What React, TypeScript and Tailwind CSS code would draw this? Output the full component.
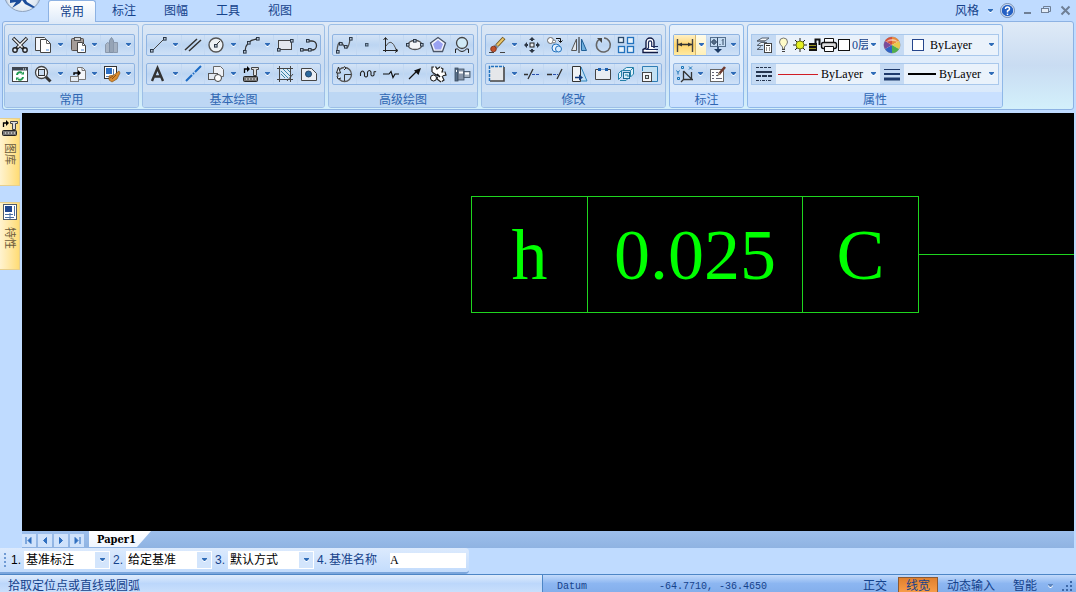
import React from "react";

const FONT = "font-['Liberation_Sans','Noto_Sans_CJK_SC',sans-serif]";

const node = (x: number, y: number) => (
  <rect key={`${x}-${y}`} x={x + 0.5} y={y + 0.5} width="2.6" height="2.6" fill="#b9c6d6" stroke="#2b3746" />
);

// every toolbar glyph is drawn on an 18x18 grid
const icons: Record<string, React.ReactNode> = {
  cut: (
    <>
      <path d="M2 2l11 11M16 2L5 13" stroke="#222" strokeWidth="3.4" />
      <path d="M2.500 2.500l9 9M15.500 2.500l-9 9" stroke="#f2f4f6" strokeWidth="1.500" />
      <circle cx="4" cy="14" r="2.200" fill="#dfe9f5" stroke="#222" strokeWidth="1.400" />
      <circle cx="14" cy="14" r="2.200" fill="#dfe9f5" stroke="#222" strokeWidth="1.400" />
    </>
  ),
  copy: (
    <>
      <path d="M1.500 1.500h9l1 1v12h-10z" fill="#f4f6fa" stroke="#444" />
      <path d="M6.500 3.500h6l4 4v9h-10z" fill="#fff" stroke="#444" />
      <path d="M12.500 3.500v4h4" stroke="#666" />
      <rect x="12" y="13" width="3" height="2" fill="#a9c7ee" stroke="none" />
    </>
  ),
  paste: (
    <>
      <rect x="2.500" y="2.500" width="12" height="12" rx="1" fill="#a49c98" stroke="#57504d" />
      <rect x="5.500" y="1.500" width="6" height="3" fill="#d8d8d8" stroke="#555" />
      <path d="M8.500 6.500h5l3 3v7h-8z" fill="#fff" stroke="#444" />
      <path d="M13.500 6.500v3h3" stroke="#666" />
      <rect x="12" y="13" width="3" height="2" fill="#a9c7ee" stroke="none" />
    </>
  ),
  chart: (
    <>
      <path d="M2.500 8.500l2-2 2 1v9h-4z" fill="#a9b5c5" stroke="#8a99ad" />
      <path d="M6.500 4.500l2-3 2 3v12h-4z" fill="#96a4b6" stroke="#8090a5" />
      <path d="M10.500 6.500h4v10h-4z" fill="#a4b1c2" stroke="#8a99ad" />
    </>
  ),
  refresh: (
    <>
      <rect x="1.500" y="2.500" width="15" height="14" fill="#fff" stroke="#444" />
      <path d="M1 4h16" stroke="#3c4652" strokeWidth="3" />
      <path d="M12 4h1M14 4h1" stroke="#fff" />
      <path d="M6 10a3 3 0 0 1 5-2M12 12a3 3 0 0 1-5 2" stroke="#1f9a50" strokeWidth="2" />
      <path d="M10 9.500h3v-3zM8 12.500H5v3z" fill="#1f9a50" stroke="none" />
    </>
  ),
  zoom: (
    <>
      <path d="M11 11l5.500 5.500" stroke="#333" strokeWidth="3" />
      <circle cx="7.500" cy="7.500" r="6" fill="#f6f9fd" stroke="#444" strokeWidth="1.300" />
      <rect x="4.500" y="4.500" width="6" height="6" fill="#c8dcf2" stroke="#333" />
    </>
  ),
  insert: (
    <>
      <path d="M8.500 2.500h5l3 3v9h-8z" fill="#f5f7fa" stroke="#777" />
      <path d="M13 2.500v3h3" stroke="#777" />
      <rect x="1.500" y="11.500" width="8" height="5" fill="#e4ebf3" stroke="#777" />
      <path d="M5 10V8h6" stroke="#000" strokeWidth="1.400" />
      <path d="M9 5l3 3-3 3z" fill="#000" stroke="none" />
    </>
  ),
  brush: (
    <>
      <rect x="1.500" y="1.500" width="12" height="12" fill="#fff" stroke="#333" />
      <rect x="3" y="3" width="6" height="6" fill="#2c6fc4" stroke="none" />
      <path d="M10.500 4v6M3 11.500h5" stroke="#5b7fae" />
      <path d="M6 11l5-1 5-4 1 2-3 6-5 3-3-2z" fill="#d98b2e" stroke="#8c5a1c" strokeWidth="0.700" />
      <path d="M9 14l4-4M7 13l3-2" stroke="#8c4f14" />
    </>
  ),
  line: (
    <>
      <path d="M3 15L15 3" />
      {node(1, 13)}
      {node(14, 1)}
    </>
  ),
  parallel: <path d="M1 14L13 3M5 15L17 4" stroke="#333" strokeWidth="1.500" />,
  circle: (
    <>
      <circle cx="9" cy="9" r="7" fill="#edf1f5" stroke="#555" strokeWidth="1.400" />
      <path d="M9 9l4-4" stroke="#333" />
      {node(7, 8)}
    </>
  ),
  arc: (
    <>
      <path d="M3 15Q4 4 15 3" stroke="#333" strokeWidth="1.300" />
      {node(1, 14)}
      {node(5, 5)}
      {node(14, 1)}
    </>
  ),
  rect: (
    <>
      <rect x="2.500" y="4.500" width="13" height="9" fill="#e3e7ed" stroke="#444" />
      {node(1, 12)}
      {node(14, 3)}
    </>
  ),
  polyline: (
    <>
      <path d="M2 14h8M8 5h4a4.500 4.500 0 0 1 0 9h-2" stroke="#333" strokeWidth="1.300" />
      {node(0, 12)}
      {node(6, 3)}
      {node(8, 12)}
    </>
  ),
  letter: <path d="M3 16L8.500 3 14 16M5 11.500h7" stroke="#333" strokeWidth="2.400" />,
  centerline: <path d="M2 16l6-6M9 9l1-1M11 7l6-6" stroke="#1c6bc4" strokeWidth="2" />,
  shapes: (
    <>
      <path d="M6.500 1.500h7l3 3v7h-10z" fill="#eef1f6" stroke="#666" />
      <rect x="1.500" y="8.500" width="9" height="6" fill="#e3e9f1" stroke="#555" />
      <circle cx="11" cy="13" r="3.500" fill="#fff" stroke="#444" />
    </>
  ),
  library: (
    <>
      <path d="M2.500 8V4h3" stroke="#000" strokeWidth="1.300" />
      <path d="M5 1l3 3-3 3z" fill="#000" stroke="none" />
      <path d="M9.500 2.500h7v2h-2v6h-3v-6h-2z" fill="#ddd" stroke="#444" />
      <rect x="1.500" y="11.500" width="14" height="5" rx="1" fill="#777" stroke="#222" />
      <path d="M4 14h1M7 14h1M10 14h1M13 14h1" stroke="#fff" />
    </>
  ),
  hatch: (
    <>
      <rect x="4.500" y="3.500" width="10" height="10" fill="#dceaf5" stroke="none" />
      <path d="M5 6l7 7M5 9l4 4M7 4l7 7M11 4l3 3" stroke="#3a86a8" />
      <path d="M3.500 1v16M1 3.500h16M14.500 1v16M1 14.500h16M17 9l-6 7" stroke="#444" />
    </>
  ),
  region: (
    <>
      <path d="M1.500 3.500h10l5 5v7h-15z" fill="#e9edf3" stroke="#444" />
      <circle cx="8.500" cy="9" r="3" fill="#2c6a9e" stroke="#24466a" />
    </>
  ),
  spline: (
    <>
      <path d="M2 15C3 3 6 6 9 10s5 1 6-7" stroke="#555" strokeWidth="1.300" />
      {node(1, 14)}
      {node(4, 6)}
      {node(9, 9)}
      {node(14, 1)}
    </>
  ),
  point: <rect x="6.500" y="7.500" width="2.500" height="2.500" fill="#8fa2b8" stroke="#3c5064" />,
  curve: (
    <>
      <path d="M3.500 2v14M1 14.500h14M1.500 4l2-2.500 2 2.500M13 12.500l3 2-3 2" stroke="#222" />
      <path d="M4 10Q9 1 14 13" stroke="#555" />
    </>
  ),
  ellipse: (
    <>
      <ellipse cx="9" cy="9" rx="7" ry="4.500" fill="#f4f5f7" stroke="#555" strokeWidth="1.300" />
      {node(0, 7)}
      {node(14, 7)}
      {node(7, 3)}
    </>
  ),
  polygon: (
    <>
      <path d="M9 1.500l7.500 5.500-3 8.500h-9L1.500 7z" fill="#f3f5ff" stroke="#4a5568" strokeWidth="1.300" />
      <path d="M9 4l5 4-2 5.500H6L4 8z" fill="#9aa2f2" stroke="none" />
    </>
  ),
  balloon: (
    <>
      <circle cx="9" cy="7" r="5.500" fill="#d0eaf7" stroke="#444" strokeWidth="1.300" />
      <path d="M2.500 17v-4h2q4.500 5 9 0h2v4" stroke="#222" />
    </>
  ),
  pie: (
    <>
      <circle cx="9.500" cy="9.500" r="7" stroke="#555" strokeWidth="1.300" />
      <path d="M9.500 16V9.500H16" stroke="#333" />
      <path d="M1.500 8l2-6 2 6zM9 1.500l2 1.500-2 2M2 11l1 3 3-1" fill="#dfe9f5" stroke="#222" />
    </>
  ),
  wave: <path d="M1.500 11V8q2-4 4 0v3q1.500 2 3 0V7q2-3 3.500 0v3q1.500 2 3 0V7q1-1 2 0" stroke="#222" strokeWidth="1.100" />,
  breakline: <path d="M1 9h6l2-2.500 2 6L13 9h4" stroke="#111" strokeWidth="1.200" />,
  arrow: (
    <>
      <path d="M3 14l7-7" stroke="#111" strokeWidth="1.300" />
      <path d="M15 3l-2.500 7L8 5.500z" fill="#111" stroke="none" />
    </>
  ),
  gear: (
    <>
      <path
        d="M3 7V2h4l1 2 3-2 3 2-1 3h3l1 3-4 1 2 4-3 2-4-3 1-3z"
        fill="#fff"
        stroke="#222"
        strokeWidth="1.200"
        strokeDasharray="7 1"
      />
      <circle cx="4.500" cy="13" r="3" fill="#fff" stroke="#111" />
      <path d="M8 9l3 3" stroke="#111" strokeWidth="1.600" />
    </>
  ),
  shaft: (
    <>
      <rect x="2" y="3" width="3" height="13" fill="#59708a" stroke="#394a5e" strokeWidth="0.800" />
      <rect x="5" y="4" width="6" height="11" fill="#8795a8" stroke="#394a5e" strokeWidth="0.800" />
      <rect x="11" y="6.500" width="6" height="6" fill="#a5b3c2" stroke="#394a5e" strokeWidth="0.800" />
      <path d="M3 6h1M6 7.500h4M12 8.500h4" stroke="#fff" strokeWidth="2" />
    </>
  ),
  erase: (
    <>
      <path d="M1 16.500h5M12 16.500h5" stroke="#444" />
      <path d="M16 2L9 9.500" stroke="#74581f" strokeWidth="4" />
      <path d="M15.500 2.500L9 9.500" stroke="#e9c66c" strokeWidth="2" />
      <path d="M9 9.500l-2 2" stroke="#7d8794" strokeWidth="4.400" />
      <circle cx="5.500" cy="13" r="2.800" fill="#c0502a" stroke="#7c2c12" strokeWidth="0.800" />
    </>
  ),
  move: (
    <>
      <rect x="7" y="7" width="4" height="4" fill="#e9edf3" stroke="#222" />
      <path d="M9 1l3 3H6zM9 17l3-3H6zM1 9l3-3v6zM17 9l-3-3v6z" fill="#2c3644" stroke="none" />
      <path d="M9 3v2M9 13v2M3 9h2M13 9h2" stroke="#2c3644" strokeWidth="2" />
    </>
  ),
  duplicate: (
    <>
      <circle cx="4.500" cy="4.500" r="3" fill="#fff" stroke="#666" />
      <circle cx="8" cy="5.500" r="1.500" fill="#fff" stroke="#777" />
      <circle cx="10" cy="12" r="4" fill="#e6f2ff" stroke="#2272bd" />
      <circle cx="12.500" cy="13" r="3" fill="#d5eaff" stroke="#2272bd" />
      <path d="M10 2.500h4.500V6M12.500 4.500l2 2 2-2" stroke="#111" />
    </>
  ),
  mirror: (
    <>
      <path d="M9 1v16" stroke="#222" />
      <path d="M6.500 3v11.500h-5z" fill="#e3e8ee" stroke="#555" />
      <path d="M11.500 3v11.500h5z" fill="#6fb0df" stroke="#205f96" />
    </>
  ),
  rotate: (
    <>
      <path d="M5 3.500a7 7 0 1 0 5-1.500" stroke="#666" strokeWidth="1.500" />
      <path d="M3 2h5v5z" fill="#444" stroke="none" />
    </>
  ),
  array: (
    <>
      <rect x="1.500" y="1.500" width="5" height="5" fill="#e8f2fb" stroke="#2b4a6c" strokeWidth="1.300" />
      <rect x="10.500" y="1.500" width="6" height="6" fill="#e8f2fb" stroke="#2272bd" strokeWidth="1.300" />
      <rect x="1.500" y="10.500" width="6" height="6" fill="#e8f2fb" stroke="#2272bd" strokeWidth="1.300" />
      <rect x="10.500" y="10.500" width="6" height="6" fill="#e8f2fb" stroke="#2272bd" strokeWidth="1.300" />
    </>
  ),
  offset: (
    <>
      <path d="M17 16.500H2v-3l3-1.500V6a4 4 0 0 1 8 0v6" fill="#fff" stroke="#111a44" strokeWidth="1.400" />
      <path d="M17 13.500H5.500l2-1.500V6.500a1.600 1.600 0 0 1 3.200 0v4H17" stroke="#1b2b5c" strokeWidth="1.200" />
    </>
  ),
  select: (
    <>
      <rect x="2" y="2" width="14" height="14" fill="#e5e7ea" stroke="none" />
      <path d="M2 16h14V2" stroke="#444" strokeWidth="1.600" />
      <path d="M1.500 16V1.500H16" stroke="#2272bd" strokeWidth="1.500" strokeDasharray="3 1" />
    </>
  ),
  trim: (
    <>
      <path d="M1 9.500h4M5 14L10 4" stroke="#333" strokeWidth="1.300" />
      <path d="M9 9.500h8" stroke="#2a4fae" strokeDasharray="3 1" />
    </>
  ),
  extend: (
    <>
      <path d="M1 9.500h5M11 14l5-10" stroke="#333" strokeWidth="1.300" />
      <path d="M7 9.500h5" stroke="#2a4fae" strokeDasharray="3 1" />
    </>
  ),
  stretch: (
    <>
      <path d="M11 2l6 14H9z" fill="#bfdff5" stroke="#2f84bd" />
      <path d="M2.500 1.500h8v15h-8z" fill="#eef2f6" stroke="#333" />
      <path d="M5 12.500h5" stroke="#123a7c" strokeWidth="1.300" />
      <path d="M9 9.500l4 3-4 3z" fill="#123a7c" stroke="none" />
    </>
  ),
  breakAt: (
    <>
      <path d="M5 4.500H1.500v10h15v-10H14" fill="#e8edf3" stroke="#444" />
      <path d="M7 4.500h5" stroke="#7ba5d5" />
      <rect x="4" y="3" width="3" height="3" fill="#1c5fae" stroke="none" />
      <rect x="11" y="3" width="3" height="3" fill="#1c5fae" stroke="none" />
    </>
  ),
  explode: (
    <>
      <path d="M5.500 5.500l4-3h7l-3 3zM13.500 6v6l3-3V3M1.500 8.500l3-3v6l-3 3z" fill="#dff2fb" stroke="#2580a8" />
      <rect x="6.500" y="7.500" width="6" height="6" fill="#d5ecf8" stroke="#1a6790" />
      <path d="M3 15.500h6l2-2M8 10h3v2" stroke="#2580a8" />
    </>
  ),
  scale: (
    <>
      <path d="M1.500 6V1.500h15v15H10" fill="#c3e1f3" stroke="#2f7db4" />
      <rect x="1.500" y="7.500" width="9" height="9" fill="#f4f5f7" stroke="#444" />
      <rect x="4.500" y="10.500" width="3" height="3" fill="#cdd" stroke="#444" />
    </>
  ),
  dimension: (
    <>
      <path d="M1.500 3v13M16.500 3v13" stroke="#444" strokeWidth="1.400" />
      <path d="M2 8.500h14" stroke="#333" strokeWidth="1.300" />
      <path d="M2 8.500L6 6.500v4zM16 8.500l-4-2v4z" fill="#333" stroke="none" />
    </>
  ),
  tolerance: (
    <>
      <rect x="1.500" y="1.500" width="15" height="9" fill="#c5dcf3" stroke="#56708e" />
      <circle cx="5" cy="6" r="2" stroke="#334a66" />
      <path d="M8.500 1.500v9M2 6h6M5 3v6M10.500 8.500h1M14 3v6M13 4.500l1-1" stroke="#334a66" />
      <path d="M9 11v3" stroke="#1d3b63" strokeWidth="1.600" />
      <path d="M9 17l-4-4h8z" fill="#1d3b63" stroke="none" />
    </>
  ),
  coordinate: (
    <>
      <path d="M7.500 6v8.500H17M7.500 14.500L5 17M7.500 6l8 8V7" stroke="#333" strokeWidth="1.300" />
      <path d="M0.500 5.500l1.500 2 1.500-2M2 7.500v2M5.500 1.500h2v2h-2zM13 1.500l3 3M16 1.500l-3 3M1.500 12.500h2v2h-2z" stroke="#1672b5" />
    </>
  ),
  edit: (
    <>
      <rect x="1.500" y="4.500" width="13" height="12" fill="#fff" stroke="#666" />
      <path d="M3 7.500h2M7 7.500h2M3 10.500h2M7 10.500h2M3 13.500h2M7 13.500h6" stroke="#667" />
      <path d="M16 2l-6 7" stroke="#6f3a2e" strokeWidth="2.600" />
      <path d="M10.500 7.500l-2.500 3.500 3.500-2z" fill="#e8cf9c" stroke="#333" strokeWidth="0.500" />
    </>
  ),
  layers: (
    <>
      <path d="M2 5l5-3h7l-4 3zM2 9.500l4-3h6M2 13.500l4-3M2 5h8M2 9.500h6M2 13.500h6" fill="#f7f9fb" stroke="#56616f" />
      <rect x="9.500" y="7.500" width="7" height="9" fill="#fff" stroke="#444" />
      <path d="M11 9.500h4M11 12h1M14 12h1M11 14h1M14 14h1" stroke="#333" />
    </>
  ),
  palette: (
    <>
      <circle cx="9" cy="9" r="8" fill="#fff" stroke="#777" strokeWidth="0.600" />
      <path d="M9 9V1a8 8 0 0 1 7 4z" fill="#e88a3c" stroke="none" />
      <path d="M9 9l7-4a8 8 0 0 1 0 8z" fill="#e8c84c" stroke="none" />
      <path d="M9 9l7 4a8 8 0 0 1-7 4z" fill="#4fae4c" stroke="none" />
      <path d="M9 9v8a8 8 0 0 1-7-4z" fill="#2f62c4" stroke="none" />
      <path d="M9 9l-7 4a8 8 0 0 1 0-8z" fill="#7a4a9a" stroke="none" />
      <path d="M9 9L2 5a8 8 0 0 1 7-4z" fill="#d4503c" stroke="none" />
      <path d="M3 6a7 6 0 0 1 12 0q-6-2-12 0z" fill="#ffffff80" stroke="none" />
    </>
  ),
  linetype: (
    <>
      <path d="M1 2.500h16" stroke="#26354f" strokeDasharray="3 1" />
      <path d="M1 7h16" stroke="#26354f" strokeWidth="2" />
      <path d="M1 11h16" stroke="#26354f" strokeWidth="2" strokeDasharray="5 1" />
      <path d="M1 15.500h16" stroke="#26354f" strokeDasharray="3 1 1 1" />
    </>
  ),
  lineweight: (
    <>
      <path d="M1 4.500h16" stroke="#1f3a6a" />
      <path d="M1 9h16" stroke="#1f3a6a" strokeWidth="2" />
      <path d="M1 14h16" stroke="#1f3a6a" strokeWidth="3" />
    </>
  ),
  properties: (
    <>
      <rect x="2.500" y="1.500" width="13" height="15" fill="#fff" stroke="#4c5a6c" />
      <rect x="4" y="3" width="7" height="6" fill="#1f478f" stroke="none" />
      <path d="M13.500 3v10M4 11.500h8M4 14.500h9M9 10v6" stroke="#4a6ea0" />
    </>
  ),
};

function Icon({ name, size = 18 }: { name: string; size?: number }) {
  return (
    <svg width={size} height={size} viewBox="0 0 18 18" fill="none" stroke="#444" className="shrink-0" aria-hidden="true">
      {icons[name]}
    </svg>
  );
}

function Caret({ className = "text-[#2f6cb8]" }: { className?: string }) {
  return (
    <svg width="5" height="4" viewBox="0 0 5 4" className={`shrink-0 ${className}`} aria-hidden="true">
      <path d="M0 1h5v1L3 4H2L0 2z" fill="#fff" />
      <path d="M0 0h5v1L3 3H2L0 1z" fill="currentColor" />
    </svg>
  );
}

interface Tool {
  icon: string;
  label: string;
  menu?: boolean;
  active?: boolean;
}

function ToolRow({ tools }: { tools: Tool[] }) {
  return (
    <div className="flex h-[22px] rounded-[2px] border border-[#8fb4e2] bg-gradient-to-b from-[#d3e3f6] via-[#bcd5f2] to-[#cfe1f7]">
      {tools.map((tool) => (
        <React.Fragment key={tool.icon}>
          <button
            type="button"
            aria-label={tool.label}
            className={`flex min-w-0 flex-1 items-center justify-center ${
              tool.active ? "bg-gradient-to-b from-[#fff0c4] via-[#ffd56b] to-[#ffe9a0]" : "border-l border-[#c3d8f1] first:border-l-0"
            }`}
          >
            <Icon name={tool.icon} />
          </button>
          {tool.menu && (
            <button
              type="button"
              aria-label={`${tool.label}菜单`}
              className={`flex w-[11px] shrink-0 items-center justify-center ${
                tool.active ? "border-l border-[#d8b96c] bg-gradient-to-b from-[#fffbe9] to-[#fff0b8]" : ""
              }`}
            >
              <Caret />
            </button>
          )}
        </React.Fragment>
      ))}
    </div>
  );
}

function Panel({
  title,
  width,
  bright,
  children,
}: {
  title: string;
  width: string;
  bright?: boolean;
  children: React.ReactNode;
}) {
  return (
    <section
      className={`flex shrink-0 flex-col overflow-hidden rounded-[3px] border pt-[9px] ${width} ${
        bright
          ? "border-[#8fb8e8] bg-gradient-to-b from-[#e6f0fb] to-[#d8e8fb]"
          : "border-[#9dbfe6] bg-gradient-to-b from-[#dbe7f5] via-[#cbddf2] to-[#d5e5f6]"
      }`}
    >
      <div className="flex flex-col gap-[7px] px-[3px] pb-[7px]">{children}</div>
      <h2 className={`h-[15px] text-center text-xs leading-[17px] text-[#2f66b2] ${bright ? "bg-[#c9e0ff]" : "bg-[#bdd7f4]"}`}>
        {title}
      </h2>
    </section>
  );
}

function Combo({
  label,
  value,
  width,
  tone = "font-['Liberation_Serif',serif] text-black",
  children,
}: {
  label: string;
  value: string;
  width: string;
  tone?: string;
  children: React.ReactNode;
}) {
  return (
    <label className={`flex min-w-0 items-center bg-[#eaf2fb] pr-1 ${width}`}>
      {children}
      <select aria-label={label} className={`mr-[3px] min-w-0 flex-1 appearance-none overflow-hidden bg-transparent text-xs ${tone}`}>
        <option>{value}</option>
      </select>
      <Caret />
    </label>
  );
}

function LayerStateIcons() {
  return (
    <svg width="74" height="18" viewBox="0 0 74 18" fill="none" className="ml-[2px] shrink-0" aria-hidden="true">
      <path d="M4.500 13v-2q-3-3-3-5a4 4 0 0 1 8 0q0 2-3 5v2z" fill="#fffbc8" stroke="#777" />
      <path d="M4 13.500h3M4 15.500h3" stroke="#444" />
      <path d="M22 2v14M15 9h14M17 4l10 10M27 4L17 14" stroke="#222" />
      <circle cx="22" cy="9" r="4" fill="#e4f022" stroke="#6e7410" />
      <path d="M37.500 8V3.500h4V9" stroke="#111" strokeWidth="2" />
      <rect x="31" y="7" width="8" height="8" fill="#111" />
      <path d="M31 9.500h7M31 12.500h7" stroke="#9a9420" />
      <path d="M46.500 6V2.500h9V6" fill="#fff" stroke="#111" />
      <rect x="43.500" y="6.500" width="15" height="6" rx="2" fill="#ddd" stroke="#111" strokeWidth="1.400" />
      <path d="M46.500 10.500h9v5h-9z" fill="#fff" stroke="#111" />
      <rect x="60.500" y="3.500" width="11" height="11" fill="#fff" stroke="#111" />
    </svg>
  );
}

const commonTools: Tool[][] = [
  [
    { icon: "cut", label: "剪切" },
    { icon: "copy", label: "复制", menu: true },
    { icon: "paste", label: "粘贴", menu: true },
    { icon: "chart", label: "对象", menu: true },
  ],
  [
    { icon: "refresh", label: "刷新" },
    { icon: "zoom", label: "缩放", menu: true },
    { icon: "insert", label: "插入", menu: true },
    { icon: "brush", label: "特性匹配", menu: true },
  ],
];

const basicTools: Tool[][] = [
  [
    { icon: "line", label: "直线", menu: true },
    { icon: "parallel", label: "平行线" },
    { icon: "circle", label: "圆", menu: true },
    { icon: "arc", label: "圆弧", menu: true },
    { icon: "rect", label: "矩形" },
    { icon: "polyline", label: "多段线" },
  ],
  [
    { icon: "letter", label: "文字", menu: true },
    { icon: "centerline", label: "中心线" },
    { icon: "shapes", label: "块", menu: true },
    { icon: "library", label: "图库", menu: true },
    { icon: "hatch", label: "剖面线" },
    { icon: "region", label: "填充" },
  ],
];

const advancedTools: Tool[][] = [
  [
    { icon: "spline", label: "样条" },
    { icon: "point", label: "点" },
    { icon: "curve", label: "公式曲线" },
    { icon: "ellipse", label: "椭圆" },
    { icon: "polygon", label: "正多边形" },
    { icon: "balloon", label: "圆弧拟合" },
  ],
  [
    { icon: "pie", label: "局部放大" },
    { icon: "wave", label: "波浪线" },
    { icon: "breakline", label: "双折线" },
    { icon: "arrow", label: "箭头" },
    { icon: "gear", label: "齿轮" },
    { icon: "shaft", label: "孔轴" },
  ],
];

const modifyTools: Tool[][] = [
  [
    { icon: "erase", label: "删除", menu: true },
    { icon: "move", label: "平移" },
    { icon: "duplicate", label: "平移复制" },
    { icon: "mirror", label: "镜像" },
    { icon: "rotate", label: "旋转" },
    { icon: "array", label: "阵列" },
    { icon: "offset", label: "等距线" },
  ],
  [
    { icon: "select", label: "选择", menu: true },
    { icon: "trim", label: "裁剪" },
    { icon: "extend", label: "延伸" },
    { icon: "stretch", label: "拉伸" },
    { icon: "breakAt", label: "打断" },
    { icon: "explode", label: "分解" },
    { icon: "scale", label: "缩放" },
  ],
];

const dimensionTools: Tool[][] = [
  [
    { icon: "dimension", label: "尺寸标注", menu: true, active: true },
    { icon: "tolerance", label: "公差", menu: true },
  ],
  [
    { icon: "coordinate", label: "坐标标注", menu: true },
    { icon: "edit", label: "标注编辑", menu: true },
  ],
];

const panels = [
  { title: "常用", width: "w-[135px]", rows: commonTools },
  { title: "基本绘图", width: "w-[183px]", rows: basicTools },
  { title: "高级绘图", width: "w-[150px]", rows: advancedTools },
  { title: "修改", width: "w-[185px]", rows: modifyTools },
];

function Header() {
  return (
    <header className="flex h-[21px] shrink-0">
      <svg width="46" height="16" viewBox="0 0 46 16" className="shrink-0" aria-hidden="true">
        <defs>
          <radialGradient id="orb" cx="0.5" cy="0.6" r="0.5">
            <stop offset="0" stopColor="#ffffff" />
            <stop offset="0.8" stopColor="#dde7f2" />
            <stop offset="1" stopColor="#9fb0c6" />
          </radialGradient>
        </defs>
        <circle cx="22.500" cy="-7" r="18.500" fill="url(#orb)" stroke="#8fa3be" />
        <path d="M10 0h12l-2 3-8 5 4-6-6 1zM22 0h4l1 2 8 5-2 1-8-4z" fill="#1b4c9a" />
      </svg>
      <nav className="flex flex-1">
        {["常用", "标注", "图幅", "工具", "视图"].map((tab, i) => (
          <a
            key={tab}
            href="#"
            className={`mx-[2px] flex w-12 shrink-0 items-center justify-center text-xs ${
              i === 0 ? "z-10 -mb-px rounded-t-[3px] border border-b-0 border-[#8db2e3] bg-gradient-to-b from-white to-[#dfebf9]" : ""
            }`}
          >
            {tab}
          </a>
        ))}
      </nav>
      <div className="flex items-center pr-[5px]">
        <button type="button" className="flex items-center gap-[9px] text-xs">
          风格 <Caret />
        </button>
        <button type="button" aria-label="帮助" className="ml-[7px]">
          <svg width="15" height="15" viewBox="0 0 15 15" fill="none">
            <circle cx="7.500" cy="7.500" r="6.500" fill="#2561c4" stroke="#dfe9f8" strokeWidth="1.500" />
            <circle cx="7.500" cy="7.500" r="7" stroke="#56749f" strokeWidth="0.800" />
            <path d="M5.500 6q0-2 2-2t2 2q0 1-2 2v1.500M7.500 10.500V12" stroke="#fff" strokeWidth="1.500" />
          </svg>
        </button>
        <button type="button" aria-label="最小化" className="ml-2">
          <svg width="10" height="11" viewBox="0 0 10 11">
            <rect x="1" y="7" width="7" height="2" fill="#6f7f95" />
          </svg>
        </button>
        <button type="button" aria-label="还原" className="ml-2">
          <svg width="11" height="11" viewBox="0 0 11 11" fill="none" stroke="#6f7f95">
            <path d="M2.500 3V1.500h7v5H8M3 1.500h6" />
            <rect x="0.500" y="3.500" width="7" height="4" fill="#e4edf8" />
          </svg>
        </button>
        <button type="button" aria-label="关闭" className="ml-2">
          <svg width="11" height="11" viewBox="0 0 11 11" fill="none">
            <path d="M1.500 1.500l8 8M9.500 1.500l-8 8" stroke="#6f7f95" strokeWidth="2" />
          </svg>
        </button>
      </div>
    </header>
  );
}

function PropertiesPanel() {
  const side = "flex w-6 shrink-0 items-center justify-center bg-[#c5daf3]";
  return (
    <Panel title="属性" width="w-[256px]" bright>
      <div className="flex h-[22px] border border-[#a9c8ec]">
        <button type="button" aria-label="图层" className={side}>
          <Icon name="layers" />
        </button>
        <Combo
          label="图层选择"
          value="0层"
          width="w-[104px]"
          tone="font-['Liberation_Serif','Noto_Sans_CJK_SC',serif] text-[#15428b]"
        >
          <LayerStateIcons />
        </Combo>
        <button type="button" aria-label="颜色" className={side}>
          <Icon name="palette" />
        </button>
        <Combo label="颜色选择" value="ByLayer" width="flex-1">
          <span className="ml-2 mr-[6px] size-3 shrink-0 border border-[#26468c] bg-white" />
        </Combo>
      </div>
      <div className="flex h-[22px] border border-[#a9c8ec]">
        <button type="button" aria-label="线型" className={side}>
          <Icon name="linetype" />
        </button>
        <Combo label="线型选择" value="ByLayer" width="w-[104px]">
          <span className="ml-[2px] mr-[3px] h-px w-10 shrink-0 bg-[#d01c24]" />
        </Combo>
        <button type="button" aria-label="线宽" className={side}>
          <Icon name="lineweight" />
        </button>
        <Combo label="线宽选择" value="ByLayer" width="flex-1">
          <span className="ml-1 mr-[3px] h-[2px] w-7 shrink-0 bg-black" />
        </Combo>
      </div>
    </Panel>
  );
}

function Ribbon() {
  return (
    <div className="mx-[2px] mb-[3px] flex shrink-0 gap-[3px] rounded-[3px] border border-[#8db2e3] bg-gradient-to-b from-[#dfeaf7] via-[#c9dcf2] to-[#d3f0fb] px-px pb-px pt-[2px]">
      {panels.map((panel) => (
        <Panel key={panel.title} title={panel.title} width={panel.width}>
          {panel.rows.map((row, i) => (
            <ToolRow key={i} tools={row} />
          ))}
        </Panel>
      ))}
      <Panel title="标注" width="w-[75px]" bright>
        {dimensionTools.map((row, i) => (
          <ToolRow key={i} tools={row} />
        ))}
      </Panel>
      <PropertiesPanel />
    </div>
  );
}

function SideTabs() {
  return (
    <aside className="flex w-[22px] shrink-0 flex-col gap-4 pt-[5px]">
      {[
        { icon: "library", text: "图库" },
        { icon: "properties", text: "特性" },
      ].map((tab) => (
        <button
          key={tab.text}
          type="button"
          className="flex h-[68px] w-5 flex-col items-center gap-[6px] border border-l-0 border-[#e6cf8e] bg-gradient-to-r from-[#fff3cf] to-[#ffdc74] text-[#6b5a3c]"
        >
          <Icon name={tab.icon} />
          <span className="text-[11px] leading-3 [text-orientation:sideways] [writing-mode:vertical-rl]">{tab.text}</span>
        </button>
      ))}
    </aside>
  );
}

function Drawing() {
  return (
    <main className="relative min-h-0 flex-1 overflow-hidden bg-black">
      {/* tolerance frame with its leader running off the sheet */}
      <div className="absolute left-[449px] right-0 top-[83px] flex items-center font-['Liberation_Serif',serif] text-7xl text-[#00ff00]">
        <div className="grid h-[117px] w-[448px] grid-cols-[116px_215px_1fr] divide-x divide-[#1fd51f] border border-[#1fd51f]">
          <span className="flex items-center justify-center">h</span>
          <span className="flex items-center justify-center">0.025</span>
          <span className="flex items-center justify-center">C</span>
        </div>
        <div className="h-px flex-1 bg-[#1fd51f]" />
      </div>
    </main>
  );
}

function SheetBar() {
  const steps = [
    { label: "第一页", d: "M3 2v7M8 2.500L5 5.500l3 3z" },
    { label: "上一页", d: "M7.500 2.500l-3 3 3 3z" },
    { label: "下一页", d: "M4.500 2.500l3 3-3 3z" },
    { label: "最后一页", d: "M9 2v7M4 2.500l3 3-3 3z" },
  ];
  return (
    <div className="flex h-[17px] shrink-0 items-start bg-gradient-to-b from-[#9dbfec] to-[#8fb3e2]">
      <div className="flex gap-[2px] pt-[3px]">
        {steps.map((step) => (
          <button key={step.label} type="button" aria-label={step.label} className="flex h-[13px] w-[14px] items-center justify-center bg-[#cfe2fb]">
            <svg width="12" height="11" viewBox="0 0 12 11" fill="#2f6fc0" stroke="#2f6fc0">
              <path d={step.d} strokeWidth="1" />
            </svg>
          </button>
        ))}
      </div>
      <button
        type="button"
        className="ml-[5px] h-4 w-[62px] bg-gradient-to-b from-white to-[#eef5ff] pl-2 text-left font-['DejaVu_Serif_Condensed','DejaVu_Serif',serif] text-[11px] font-bold leading-[18px] text-black [clip-path:polygon(0_0,100%_0,48px_100%,0_100%)]"
      >
        Paper1
      </button>
    </div>
  );
}

function CommandBar() {
  const options = ["基准标注", "给定基准", "默认方式"];
  return (
    <form className="flex h-[26px] shrink-0">
      <div className="flex items-center rounded-r-[4px] border-b-2 border-[#7ba6dc] bg-gradient-to-b from-[#dceafd] to-[#c3dcfc] pr-[3px]">
        <span className="ml-1 mr-[5px] h-[14px] w-0 border-l-2 border-dotted border-[#6f9ad4]" />
        {options.map((option, i) => (
          <label key={option} className="flex items-center">
            <span className={`w-[13px] ${i === 0 ? "text-black" : ""}`}>{i + 1}.</span>
            <span className="mr-[3px] flex h-[18px] w-[86px] items-center border border-white bg-white">
              <select className="h-4 min-w-0 flex-1 appearance-none bg-white pl-px text-xs leading-4 text-black">
                <option>{option}</option>
              </select>
              <span className="flex h-4 w-[14px] items-center justify-center bg-[#d3e5fc]">
                <Caret />
              </span>
            </span>
          </label>
        ))}
        <label className="flex items-center">
          <span className="w-[12px]">4.</span>
          <span className="w-[61px]">基准名称</span>
          <input
            type="text"
            defaultValue="A"
            className="h-[15px] w-[76px] bg-white font-['Liberation_Serif',serif] text-xs leading-[15px] text-black"
          />
        </label>
      </div>
    </form>
  );
}

function StatusBar() {
  return (
    <footer className="flex h-[18px] shrink-0 overflow-hidden border-t border-[#4d86c6] leading-3">
      <p className="w-[543px] shrink-0 border-r border-[#4d86c6] bg-gradient-to-b from-[#e0ecfc] via-[#bcd7fb] to-[#c9dffc] pl-2 pt-[5px]">
        拾取定位点或直线或圆弧
      </p>
      <div className="flex flex-1 items-start bg-gradient-to-b from-[#c2dafb] via-[#8cb6f1] to-[#84afec] pl-[14px] pr-[3px] pt-[2px]">
        <span className="w-[102px] pt-[4px] font-['Liberation_Mono',monospace] text-[10px]">Datum</span>
        <span className="flex-1 pt-[4px] font-['Liberation_Mono',monospace] text-[10px]">-64.7710, -36.4650</span>
        <button type="button" className="pt-[3px]">正交</button>
        <button
          type="button"
          className="ml-[11px] h-[18px] w-10 shrink-0 border border-[#8c5a34] bg-gradient-to-b from-[#e0802e] to-[#fba04a] pb-1 pt-[2px]"
        >
          线宽
        </button>
        <button type="button" className="ml-[9px] pt-[3px]">动态输入</button>
        <button type="button" className="ml-[18px] flex items-center gap-[11px] pt-[3px]">
          智能 <Caret className="text-[#5d86bf]" />
        </button>
        <svg width="12" height="12" viewBox="0 0 12 12" className="ml-2 mt-[3px]" fill="#3d68a8" aria-hidden="true">
          <path d="M9 1h2v2H9zM5 5h2v2H5zM9 5h2v2H9zM1 9h2v2H1zM5 9h2v2H5zM9 9h2v2H9z" />
        </svg>
      </div>
    </footer>
  );
}

export default function App() {
  return (
    <div className={`flex h-screen min-w-[1010px] flex-col overflow-hidden bg-[#bfdbff] text-xs text-[#15428b] ${FONT}`}>
      <Header />
      <Ribbon />
      <div className="flex min-h-0 flex-1">
        <SideTabs />
        <div className="mr-[2px] flex min-w-0 flex-1 flex-col">
          <Drawing />
          <SheetBar />
        </div>
      </div>
      <CommandBar />
      <StatusBar />
    </div>
  );
}
